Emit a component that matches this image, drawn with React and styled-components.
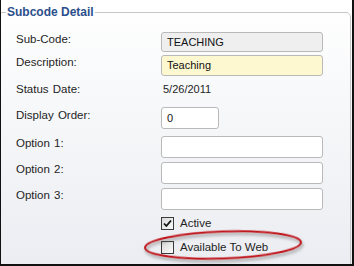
import React from 'react';
import styled, {createGlobalStyle} from 'styled-components';

const GlobalStyle = createGlobalStyle`
    html, body {
        margin: 0;
        padding: 0;
        background: #fff;
    }
    * {
        box-sizing: border-box;
    }
`

const Frame = styled.div`
    position: relative;
    width: 354px;
    height: 266px;
    overflow: hidden;
    border-left: 1px solid #111;
    border-right: 2px solid #111;
    border-bottom: 2px solid #111;
    padding-right: 1px;
    background: linear-gradient(#ffffff 0%, #f6f7f9 45%, #ecedf2 100%);
    font-family: "Liberation Sans", Arial, sans-serif;
    color: #1e1e1e;
`

const Fieldset = styled.fieldset`
    margin: 5px 0 0 -3px;
    padding: 0;
    height: 300px;
    border: 1px solid #c6c6c6;
    border-radius: 5px;
`

const Legend = styled.legend`
    margin-left: 7px;
    padding: 0 1px;
    font-size: 12px;
    line-height: 14px;
    font-weight: bold;
    color: #2b4f8c;
`

const Form = styled.div`
    display: flex;
    flex-direction: column;
    padding: 13px 0 0 17px;
`

const Row = styled.div`
    display: grid;
    grid-template-columns: 145px 1fr;
    align-items: start;
    height: ${props => props.height}px;
`

const Label = styled.div`
    font-size: 11.5px;
    line-height: 14px;
    word-spacing: 1px;
    padding-top: ${props => props.offset || 0}px;
`

const Field = styled.div`
    width: ${props => props.width || 162}px;
    height: ${props => props.height || 21}px;
    border: 1px solid #b9b9b9;
    border-radius: 3px;
    background: ${props => props.bg || '#ffffff'};
    font-size: 11px;
    line-height: ${props => (props.height || 21) - 2}px;
    padding-left: 5px;
    color: #111;
`

const Value = styled.div`
    font-size: 11px;
    line-height: 14px;
    padding-left: 2px;
    padding-top: 2px;
`

const CheckRow = styled.label`
    display: flex;
    align-items: center;
    gap: 6px;
    padding-top: 2px;
    font-size: 11.5px;
    line-height: 14px;
`

const Box = styled.span`
    width: 13px;
    height: 13px;
    border: 1px solid #3a3a3a;
    background: linear-gradient(135deg, #d8d8d8, #fbfbfb);
    display: flex;
    align-items: center;
    justify-content: center;
`

const Annotation = styled.svg`
    position: absolute;
    left: 0;
    top: 0;
    pointer-events: none;
`

const Check = ({checked, children}) => (
    <CheckRow>
        <Box>
            {checked && (
                <svg width="9" height="9" viewBox="0 0 9 9">
                    <path d="M1 4.5 L3.4 7 L8 1.5" stroke="#111" strokeWidth="1.8" fill="none" />
                </svg>
            )}
        </Box>
        {children}
    </CheckRow>
)

const App = () => {
    return (
        <Frame>
            <GlobalStyle />
            <Fieldset>
                <Legend>Subcode Detail</Legend>
                <Form>
                    <Row height={23}>
                        <Label>Sub-Code:</Label>
                        <Field height={20} bg="#efefef">TEACHING</Field>
                    </Row>
                    <Row height={25}>
                        <Label>Description:</Label>
                        <Field bg="#fef8d0">Teaching</Field>
                    </Row>
                    <Row height={27}>
                        <Label offset={2}>Status Date:</Label>
                        <Value>5/26/2011</Value>
                    </Row>
                    <Row height={29}>
                        <Label offset={1}>Display Order:</Label>
                        <Field width={58} height={22}>0</Field>
                    </Row>
                    <Row height={26}>
                        <Label>Option 1:</Label>
                        <Field height={22} />
                    </Row>
                    <Row height={26}>
                        <Label>Option 2:</Label>
                        <Field height={22} />
                    </Row>
                    <Row height={26}>
                        <Label>Option 3:</Label>
                        <Field height={22} />
                    </Row>
                    <Row height={24}>
                        <span />
                        <Check checked>Active</Check>
                    </Row>
                    <Row height={24}>
                        <span />
                        <Check>Available To Web</Check>
                    </Row>
                </Form>
            </Fieldset>
            <Annotation width="354" height="266">
                <defs>
                    <filter id="shadow" x="-10%" y="-40%" width="120%" height="180%">
                        <feDropShadow dx="1" dy="2.5" stdDeviation="1.5" floodColor="#555" floodOpacity="0.6" />
                    </filter>
                </defs>
                <ellipse
                    cx="222"
                    cy="245"
                    rx="78"
                    ry="13.5"
                    transform="rotate(-2 222 245)"
                    fill="none"
                    stroke="#c0141c"
                    strokeWidth="2"
                    filter="url(#shadow)"
                />
            </Annotation>
        </Frame>
    )
}

export default App
